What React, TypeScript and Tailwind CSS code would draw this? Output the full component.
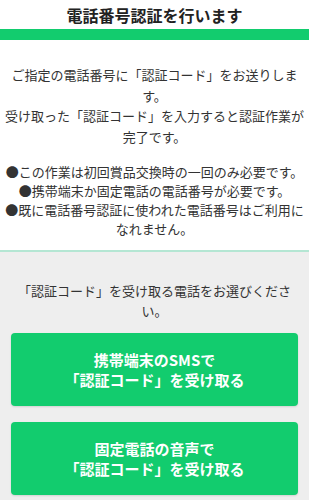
import React from "react";

export default function App() {
  const font = { fontFamily: '"Noto Sans CJK JP", "Noto Sans", sans-serif' };
  return (
    <div style={font} className="w-[309px] min-h-[500px] bg-[#eeeeee] text-[#333333]">
      <div className="bg-white">
        <div className="h-[29px] flex items-center justify-center text-[16px] font-bold text-[#222222] leading-none">
          電話番号認証を行います
        </div>
        <div className="h-[11px] bg-[#12cc6e]" />
        <div className="pt-[25px] px-[3px] text-center text-[13px] leading-[20.5px]">
          ご指定の電話番号に「認証コード」をお送りします。
          <br />
          受け取った「認証コード」を入力すると認証作業が完了です。
        </div>
        <div className="pt-[15px] pb-[12px] px-[2px] text-center text-[13px] leading-[19px]">
          ●この作業は初回賞品交換時の一回のみ必要です。
          <br />
          ●携帯端末か固定電話の電話番号が必要です。
          <br />
          ●既に電話番号認証に使われた電話番号はご利用になれません。
        </div>
        <div className="h-[2px] bg-[#b4e6d3]" />
      </div>
      <div className="px-[11px] pt-[29px] pb-[4px]">
        <div className="text-center text-[13px] leading-[20px]">
          「認証コード」を受け取る電話をお選びください。
        </div>
        <div className="mt-[12px] flex flex-col gap-[16px]">
          <button className="h-[73px] w-full rounded-[4px] bg-[#12cc6e] text-white font-bold text-[15px] leading-[19.5px] shadow-[0_1px_2px_rgba(0,0,0,0.12)]">
            携帯端末のSMSで
            <br />
            「認証コード」を受け取る
          </button>
          <button className="h-[73px] w-full rounded-[4px] bg-[#12cc6e] text-white font-bold text-[15px] leading-[19.5px] shadow-[0_1px_2px_rgba(0,0,0,0.12)]">
            固定電話の音声で
            <br />
            「認証コード」を受け取る
          </button>
        </div>
      </div>
    </div>
  );
}
